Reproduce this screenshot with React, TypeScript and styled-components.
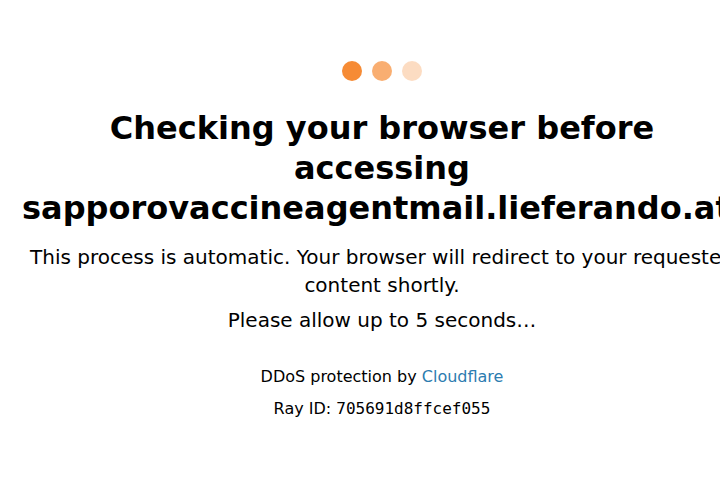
import styled, { createGlobalStyle } from "styled-components";

const GlobalStyle = createGlobalStyle`
  html, body {
    margin: 0;
    padding: 0;
    background: #ffffff;
    overflow: hidden;
  }
  body {
    font-family: "DejaVu Sans", Verdana, sans-serif;
    color: #000000;
  }
`;

const Wrapper = styled.div`
  box-sizing: border-box;
  width: 742px;
  padding: 61px 0 0 22px;
  text-align: center;
`;

const Dots = styled.div`
  display: flex;
  justify-content: center;
  gap: 10px;
  height: 20px;
`;

const Dot = styled.span<{ $fade: number }>`
  width: 20px;
  height: 20px;
  border-radius: 50%;
  background-color: #f68b35;
  opacity: ${(p) => p.$fade};
`;

const Title = styled.h1`
  margin: 27px 0 15px;
  font-size: 32px;
  line-height: 40px;
  font-weight: bold;
`;

const Text = styled.p<{ $gap?: number }>`
  margin: 0 0 ${(p) => p.$gap ?? 7}px;
  font-size: 20px;
  line-height: 28px;
`;

const Footer = styled.div`
  display: flex;
  flex-direction: column;
  gap: 8px;
  margin-top: 31px;
  font-size: 16px;
  line-height: 24px;
`;

const Link = styled.a`
  color: #2c7cb0;
  text-decoration: none;
`;

const Mono = styled.code`
  font-family: "DejaVu Sans Mono", monospace;
  font-size: 16px;
`;

export default function App() {
  return (
    <>
      <GlobalStyle />
      <Wrapper>
        <Dots>
          <Dot $fade={1} />
          <Dot $fade={0.7} />
          <Dot $fade={0.3} />
        </Dots>
        <Title>
          Checking your browser before accessing
          sapporovaccineagentmail.lieferando.at.
        </Title>
        <Text>
          This process is automatic. Your browser will redirect to your
          requested content shortly.
        </Text>
        <Text $gap={0}>Please allow up to 5 seconds…</Text>
        <Footer>
          <span>
            DDoS protection by <Link href="#">Cloudflare</Link>
          </span>
          <span>
            Ray ID: <Mono>705691d8ffcef055</Mono>
          </span>
        </Footer>
      </Wrapper>
    </>
  );
}
